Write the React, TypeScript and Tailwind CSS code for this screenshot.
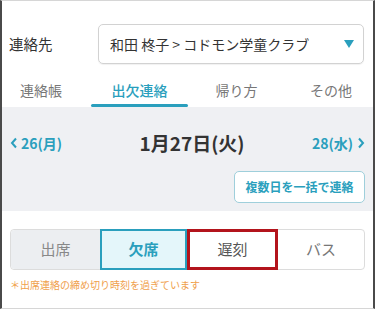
import React from "react";

export default function App() {
  const font = { fontFamily: '"Noto Sans CJK JP", "Noto Sans", sans-serif' };
  return (
    <div className="w-[375px] h-[309px] overflow-hidden bg-white" style={font}>
      <div className="h-full border-l-2 border-r-2 border-l-[#4a4a4a] border-r-[#4a4a4a] border-t border-b border-t-[#d6d6d6] border-b-[#d6d6d6] flex flex-col">
        {/* contact row */}
        <div className="flex items-center pt-[23px] pb-[9px] pl-[7px] pr-[9px]">
          <div className="w-[89px] text-[14.5px] text-[#333] leading-none">連絡先</div>
          <div className="flex-1 h-[40px] rounded-[5px] border border-[#d2d2d2] flex items-center pl-[11px] pr-[8px] shadow-[0_1px_1px_rgba(0,0,0,0.06)]">
            <span className="flex-1 text-[14px] text-[#333] leading-none">和田 柊子 &gt; コドモン学童クラブ</span>
            <svg width="12" height="10" viewBox="0 0 12 10">
              <path d="M1 1 L11 1 L6 9 Z" fill="#2a9fbd" />
            </svg>
          </div>
        </div>
        {/* tabs */}
        <div className="flex h-[34px]">
          <div className="w-[89px] flex items-center justify-start pl-[18px] text-[14px] text-[#777]">連絡帳</div>
          <div className="w-[97px] flex flex-col items-center justify-center text-[14px] text-[#2a9fbd] relative font-medium">
            出欠連絡
            <div className="absolute bottom-0 left-0 right-0 h-[3px] bg-[#2a9fbd] rounded-full" />
          </div>
          <div className="w-[97px] flex items-center justify-center text-[14px] text-[#777]">帰り方</div>
          <div className="flex-1 flex items-center justify-center text-[14px] text-[#777] pl-[4px]">その他</div>
        </div>
        {/* gray section */}
        <div className="bg-[#eff0f3] h-[104px] px-[8px] pt-[24px]">
          <div className="flex items-center justify-between h-[24px]">
            <div className="flex items-center gap-[3px] text-[#2a9fbd] font-semibold text-[14px]">
              <svg width="8" height="12" viewBox="0 0 8 12"><path d="M6 1.5 L2 6 L6 10.5" stroke="#2a9fbd" strokeWidth="2" fill="none" /></svg>
              26(月)
            </div>
            <div className="text-[19px] font-bold text-[#333] pl-[10px]">1月27日(火)</div>
            <div className="flex items-center gap-[4px] text-[#2a9fbd] font-semibold text-[14px]">
              28(水)
              <svg width="8" height="12" viewBox="0 0 8 12"><path d="M2 1.5 L6 6 L2 10.5" stroke="#2a9fbd" strokeWidth="2" fill="none" /></svg>
            </div>
          </div>
          <div className="flex justify-end mt-[16px]">
            <div className="w-[131px] h-[32px] bg-white border-[1.5px] border-[#9fcfdb] rounded-[5px] flex items-center justify-center text-[12px] font-bold text-[#2a9fbd]">
              複数日を一括で連絡
            </div>
          </div>
        </div>
        {/* segmented */}
        <div className="px-[8px] pt-[18px]">
          <div className="flex h-[41px] rounded-[4px] border border-[#dcdcdc]">
            <div className="w-[89px] bg-[#eceef1] rounded-l-[4px] flex items-center justify-center text-[15px] text-[#888]">出席</div>
            <div className="w-[87px] bg-[#e4f6fa] border-2 border-[#2a9fbd] -my-px flex items-center justify-center text-[15px] font-bold text-[#2a9fbd]">欠席</div>
            <div className="w-[91px] bg-white border-[3px] border-[#b3141c] -my-px flex items-center justify-center text-[15px] text-[#555]">遅刻</div>
            <div className="flex-1 flex items-center justify-center text-[15px] text-[#777]">バス</div>
          </div>
          <div className="mt-[10px] text-[10px] text-[#f0a04b] leading-none">＊出席連絡の締め切り時刻を過ぎています</div>
        </div>
      </div>
    </div>
  );
}
